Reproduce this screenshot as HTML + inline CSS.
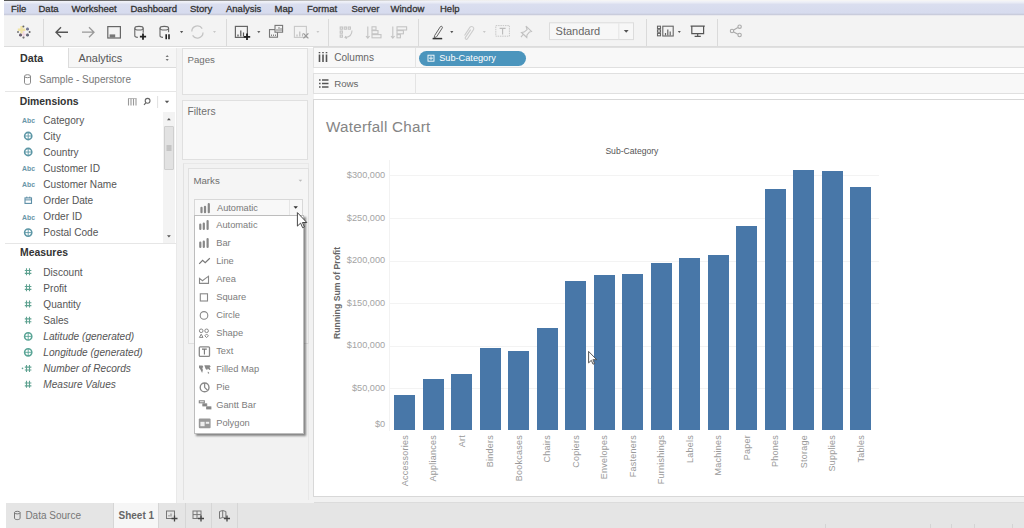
<!DOCTYPE html>
<html><head><meta charset="utf-8">
<style>
*{margin:0;padding:0;box-sizing:border-box}
html,body{width:1024px;height:528px;overflow:hidden;background:#fff;font-family:"Liberation Sans",sans-serif;color:#555}
.a{position:absolute;white-space:nowrap}
#menu{position:absolute;left:4px;top:0;width:1020px;height:16px;background:linear-gradient(#f4f5f9 0,#eef0f7 2px,#dadeef 4.5px,#d6dbee 13px,#c9ccdc 14.5px,#e9e9ee 15.5px)}
#topl{position:absolute;left:4px;top:0;width:1020px;height:1px;background:linear-gradient(90deg,#555 0,#777 150px,#bbb 300px,#eee 450px,#f5f5f5 600px)}
#menu span{position:absolute;top:4px;margin-left:-4px;font-size:9.5px;color:#333;line-height:10px;-webkit-text-stroke:0.3px #333}
#tb{position:absolute;left:4px;top:16px;width:1020px;height:31px;background:#f3f3f3;border-bottom:1px solid #dcdcdc}
.sep{position:absolute;top:3px;margin-left:-4px;width:1px;height:27px;background:#dadada}
.dd{position:absolute;font-size:6px;color:#666}
#left{position:absolute;left:5px;top:48px;width:171px;height:455px;background:#fff}
.fld{position:absolute;left:43.3px;font-size:10.1px;color:#555;line-height:12px}
.ico{position:absolute;left:21px;font-size:7.5px;font-weight:bold;color:#5f8fa6;line-height:10px}
.card{position:absolute;background:#f8f8f8;border:1px solid #e0e0e0}
.lbl{position:absolute;font-size:10px;color:#707070;line-height:12px}
.mi{position:absolute;left:22px;font-size:9.5px;color:#777;line-height:12px}
#chart{position:absolute;left:313px;top:98.6px;width:711px;height:398.6px;background:#fff;border:1px solid #d8d8d8;border-right:none}
.bar{position:absolute;width:21px;background:#4877a8}
.xl{position:absolute;font-size:9px;letter-spacing:0.25px;color:#999;transform-origin:0 0;transform:rotate(-90deg);line-height:10px}
.yl{position:absolute;font-size:8.5px;color:#a4a4a4;line-height:10px;text-align:right;width:60px}
.gl{position:absolute;left:77px;width:560px;height:1px;background:#f1f1f1}
#bot{position:absolute;left:6px;top:503px;width:1018px;height:25px;background:#e5e5e5}
</style></head><body>

<div id="menu">
<div id="topl" style="left:0"></div>
<span style="left:11px">File</span><span style="left:38.5px">Data</span><span style="left:71.5px">Worksheet</span><span style="left:130.5px">Dashboard</span><span style="left:190px">Story</span><span style="left:226px">Analysis</span><span style="left:274.5px">Map</span><span style="left:307px">Format</span><span style="left:351.5px">Server</span><span style="left:390.5px">Window</span><span style="left:440px">Help</span>
</div>

<div id="tb">
<svg style="position:absolute;left:-4px;top:0" width="1024" height="32" viewBox="0 16 1024 32">
<g fill="none" stroke-linecap="butt">
<!-- logo -->
<g style="filter:blur(0.7px)">
<path d="M21.6 26v7.5M17.8 29.7h7.6" stroke="#f1e4a6" stroke-width="2.4"/>
<path d="M23.6 31v7M20.5 34.5h6.5" stroke="#f0d8e0" stroke-width="1.6"/>
<path d="M27.5 27.6v3M26 29.1h3" stroke="#777a98" stroke-width="1.6"/>
<path d="M20.5 33.6v3M19 35.1h3" stroke="#6a6070" stroke-width="1.6"/>
<path d="M27.5 33.6v3M26 35.1h3" stroke="#666a7a" stroke-width="1.6"/>
<circle cx="23.4" cy="26.6" r="1" fill="#666" stroke="none"/>
<circle cx="18" cy="32" r="1" fill="#777" stroke="none"/>
<circle cx="29.6" cy="32" r="1" fill="#666" stroke="none"/>
<circle cx="23.5" cy="37.6" r="1.1" fill="#777" stroke="none"/>
</g>
<!-- back / fwd -->
<path d="M56 32.2h12M61 27.2l-5 5 5 5" stroke="#555" stroke-width="1.4"/>
<path d="M82 32.2h12M89 27.2l5 5-5 5" stroke="#999" stroke-width="1.3"/>
<!-- save -->
<rect x="107.8" y="26.6" width="12.6" height="11.4" stroke="#666" stroke-width="1.2"/>
<rect x="109.6" y="34.4" width="5.6" height="3.2" fill="#777" stroke="none"/>
<!-- db plus -->
<path d="M134.8 28.2v7.6c0 1 1.8 1.6 3 1.6M143.2 28.2v4.6" stroke="#666" stroke-width="1.1"/>
<ellipse cx="139" cy="28.2" rx="4.2" ry="1.8" stroke="#666" stroke-width="1.1"/>
<path d="M143 33.6v6.2M139.9 36.7h6.2" stroke="#222" stroke-width="1.8"/>
<!-- db pause -->
<path d="M160 28.2v7.6c0 1 1.8 1.6 3 1.6M168.6 28.2v4" stroke="#666" stroke-width="1.1"/>
<ellipse cx="164.3" cy="28.2" rx="4.3" ry="1.8" stroke="#666" stroke-width="1.1"/>
<path d="M166.2 34.2v5M169 34.2v5" stroke="#222" stroke-width="1.6"/>
<!-- refresh -->
<path d="M191.8 31.5a5.6 5.6 0 0 1 10.4-2.8M203 32.5a5.6 5.6 0 0 1-10.4 2.8" stroke="#c4c4c4" stroke-width="1.3"/>
<!-- new ws -->
<rect x="235.4" y="26.4" width="12" height="11" stroke="#666" stroke-width="1.2"/>
<path d="M238 36.5v-2M240.8 36.5v-6M243.5 36.5v-4" stroke="#555" stroke-width="1.2"/>
<path d="M247 33.6v6.4M243.8 36.8h6.4" stroke="#222" stroke-width="1.8"/>
<!-- duplicate -->
<rect x="269.5" y="29.6" width="8" height="7.6" stroke="#777" stroke-width="1.1"/>
<rect x="275" y="25.4" width="7.6" height="6.8" fill="#f3f3f3" stroke="#777" stroke-width="1.1"/>
<path d="M277 31v-2M279 31v-4M281 31v-3M271.5 36v-1.5M273.5 36v-1.5M275.5 36v-1.5" stroke="#777" stroke-width="0.9"/>
<!-- clear -->
<rect x="294.4" y="26.4" width="12" height="11" stroke="#c8c8c8" stroke-width="1.1"/>
<path d="M297 36.5v-2M299.8 36.5v-5M302.5 36.5v-3" stroke="#bbb" stroke-width="1.1"/>
<path d="M303.4 33.4l5 5M308.4 33.4l-5 5" stroke="#999" stroke-width="1.3"/>
<!-- swap -->
<g stroke="#c4c4c4" stroke-width="1.1">
<rect x="340.2" y="27" width="2.2" height="2.2"/><rect x="340.2" y="31" width="2.2" height="2.2"/><rect x="340.2" y="35" width="2.2" height="2.2"/>
<rect x="344.2" y="27" width="2.2" height="2.2"/><rect x="348.2" y="27" width="2.2" height="2.2"/>
<path d="M352 30.5c0 4-3 6.5-6.5 7M346 36l-1 1.6 2 1"/>
</g>
<!-- sort asc -->
<g stroke="#c4c4c4" stroke-width="1.1">
<path d="M367.8 26.5v11.5M366 36l1.8 2.2 1.8-2.2"/>
<rect x="372" y="26.8" width="4" height="3.2"/><rect x="372" y="30.6" width="6" height="3.2"/><rect x="372" y="34.6" width="9" height="3.2"/>
<path d="M392.8 26.5v11.5M391 36l1.8 2.2 1.8-2.2"/>
<rect x="397" y="26.8" width="9.6" height="3.2"/><rect x="397" y="30.6" width="6.4" height="3.2"/><rect x="397" y="34.6" width="3.4" height="3.2"/>
</g>
<!-- pen -->
<path d="M434.6 35.6l5.8-9a1.2 1.2 0 0 1 2 1.2l-5.8 9-2.4 0.9z" stroke="#666" stroke-width="1"/>
<path d="M432.6 38.6h9.6" stroke="#333" stroke-width="1.5"/>
<!-- clip -->
<path d="M464.5 35.5l5.5-8.3a2.2 2.2 0 0 1 3.6 2.4l-6.2 9.2a1.2 1.2 0 0 1-2-1.4l5.3-7.8" stroke="#ccc" stroke-width="1.1"/>
<!-- T box -->
<rect x="495.8" y="25.6" width="13.6" height="10.6" stroke="#c8c8c8" stroke-width="1" stroke-dasharray="1.5 0.8"/>
<path d="M499.6 28.4h6M502.6 28.4v6" stroke="#bbb" stroke-width="1.1"/>
<!-- pin -->
<path d="M526 26.2l5.5 5.2-2 0.6-2.5 3-0.2 2.5-5.3-5 2.6-0.4 3-2.5z M523 34.5l-2 2.6" stroke="#c0c0c0" stroke-width="1.1"/>
<!-- standard box -->
<rect x="549.5" y="22.8" width="84" height="16.8" fill="#f7f7f7" stroke="#dcdcdc" stroke-width="1"/>
<path d="M618.8 23.3v16" stroke="#e4e4e4" stroke-width="1"/>
<!-- show me -->
<g stroke="#666" stroke-width="1.1">
<rect x="657.5" y="26.2" width="3" height="2.4"/><rect x="657.5" y="29.8" width="3" height="2.4"/><rect x="657.5" y="33.4" width="3" height="2.4"/>
<rect x="662.8" y="26.2" width="10.4" height="9.8"/>
<path d="M665.5 35.5v-2.5M667.8 35.5v-6M670.2 35.5v-4" stroke-width="1.2"/>
</g>
<!-- presentation -->
<path d="M690.6 26.2h14.2M691.8 26.2v7.4h11.8v-7.4M697.7 33.6v2.6M694.6 36.3h6.2" stroke="#555" stroke-width="1.2"/>
<!-- share -->
<g stroke="#aaa" stroke-width="1.1">
<circle cx="732" cy="31" r="1.7"/><circle cx="739.6" cy="26.7" r="1.7"/><circle cx="739.6" cy="35" r="1.7"/>
<path d="M733.7 30l4.2-2.4M733.7 32l4.2 2.2"/>
</g>
</g>
<g fill="#555">
<path d="M180 31l3.2 0 -1.6 2.2z"/>
<path d="M213 31l3 0 -1.5 2z" fill="#c8c8c8"/>
<path d="M257.2 31l3.2 0 -1.6 2.2z" fill="#666"/>
<path d="M316.4 31l3 0 -1.5 2z" fill="#c8c8c8"/>
<path d="M450.2 31l3.2 0 -1.6 2.2z"/>
<path d="M482.8 31l3 0 -1.5 2z" fill="#c8c8c8"/>
<path d="M623.8 30l4.8 0 -2.4 2.8z"/>
<path d="M677.8 31l3 0 -1.5 2z"/>
</g>
<text x="555.6" y="34.6" font-family="Liberation Sans" font-size="11" fill="#666">Standard</text>
</svg>
<div class="sep" style="left:43px"></div>
<div class="sep" style="left:225.5px"></div>
<div class="sep" style="left:328px"></div>
<div class="sep" style="left:418px"></div>
<div class="sep" style="left:646px"></div>
<div class="sep" style="left:717px"></div>
</div>

<div id="left">
</div>
<div class="a" style="left:68px;top:48px;width:108px;height:20px;background:#f6f6f6;border-left:1px solid #dcdcdc;border-bottom:1px solid #dcdcdc"></div>
<div class="a" style="left:5px;top:67px;width:63px;height:1px;background:#fff"></div>
<div class="a" style="left:20px;top:52px;font-size:10.7px;font-weight:bold;color:#333;line-height:12px">Data</div>
<div class="a" style="left:78.5px;top:52px;font-size:10.9px;color:#555;line-height:12px">Analytics</div>
<div class="a" style="left:39.3px;top:73.5px;font-size:10px;color:#777;line-height:12px">Sample - Superstore</div>
<div class="a" style="left:5px;top:91px;width:171px;height:1px;background:#e6e6e6"></div>
<div class="a" style="left:19.7px;top:96px;font-size:10.4px;font-weight:bold;color:#333;line-height:12px">Dimensions</div>
<div class="a" style="left:20px;top:247.4px;font-size:10.4px;font-weight:bold;color:#333;line-height:12px">Measures</div>
<div class="a" style="left:5px;top:243px;width:171px;height:1px;background:#e6e6e6"></div>
<div class="fld" style="top:114.9px">Category</div>
<div class="fld" style="top:130.7px">City</div>
<div class="fld" style="top:146.7px">Country</div>
<div class="fld" style="top:162.7px">Customer ID</div>
<div class="fld" style="top:178.7px">Customer Name</div>
<div class="fld" style="top:195.1px">Order Date</div>
<div class="fld" style="top:211.2px">Order ID</div>
<div class="fld" style="top:227.3px">Postal Code</div>
<div class="fld" style="top:266.5px;">Discount</div>
<div class="fld" style="top:282.5px;">Profit</div>
<div class="fld" style="top:298.7px;">Quantity</div>
<div class="fld" style="top:314.9px;">Sales</div>
<div class="fld" style="top:331.1px;font-style:italic;">Latitude (generated)</div>
<div class="fld" style="top:347.0px;font-style:italic;">Longitude (generated)</div>
<div class="fld" style="top:363.1px;font-style:italic;">Number of Records</div>
<div class="fld" style="top:379.0px;font-style:italic;">Measure Values</div>
<div class="a" style="left:163px;top:112px;width:12px;height:131px;background:#f3f3f3"></div>
<div class="a" style="left:164px;top:126px;width:10px;height:44px;background:#e2e2e2;border:1px solid #cfcfcf;border-radius:1px"></div>
<svg style="position:absolute;left:0;top:0" width="1024" height="528"><g fill="none"><path d="M165.6 57l1.6-2 1.6 2zM165.6 59l1.6 2 1.6-2z" fill="#777"/><path d="M24.5 76.2v6.6c0 1 1.4 1.6 3 1.6s3-0.6 3-1.6v-6.6" stroke="#888" stroke-width="1"/><ellipse cx="27.5" cy="76.2" rx="3" ry="1.5" stroke="#888" stroke-width="1"/><path d="M128.5 98.5v7M131 98.5v7M133.5 98.5v7M136 98.5v7" stroke="#999" stroke-width="1.1"/><path d="M128 98.5h8.5" stroke="#aaa" stroke-width="0.8"/><circle cx="147.6" cy="100.8" r="2.4" stroke="#666" stroke-width="1.1"/><path d="M145.8 102.8l-1.8 2" stroke="#666" stroke-width="1.2"/><path d="M157.6 96v12" stroke="#e0e0e0"/><path d="M164.8 100.8h4.4l-2.2 2.4z" fill="#555"/><path d="M167 120.2h3.8l-1.9-2.2z" fill="#555"/><path d="M167 235.2h3.8l-1.9 2.2z" fill="#555"/><path d="M166.5 146h5M166.5 148h5M166.5 150h5" stroke="#999" stroke-width="0.8"/><text x="22" y="123.2" font-family="Liberation Sans" font-size="8" font-weight="bold" fill="#6a95a8" textLength="13" lengthAdjust="spacingAndGlyphs">Abc</text><circle cx="28.2" cy="136.0" r="3.6" stroke="#5d97a6" stroke-width="1.6"/><path d="M24.6 136.0h7.2M28.2 132.4v7.2" stroke="#5d97a6" stroke-width="0.9"/><circle cx="28.2" cy="152.0" r="3.6" stroke="#5d97a6" stroke-width="1.6"/><path d="M24.6 152.0h7.2M28.2 148.4v7.2" stroke="#5d97a6" stroke-width="0.9"/><text x="22" y="171.0" font-family="Liberation Sans" font-size="8" font-weight="bold" fill="#6a95a8" textLength="13" lengthAdjust="spacingAndGlyphs">Abc</text><text x="22" y="187.0" font-family="Liberation Sans" font-size="8" font-weight="bold" fill="#6a95a8" textLength="13" lengthAdjust="spacingAndGlyphs">Abc</text><rect x="25" y="197.9" width="6.5" height="5.5" stroke="#5d8ea6" stroke-width="1.1"/><path d="M25 199.9h6.5M26.8 196.6v1.6M29.8 196.6v1.6" stroke="#5d8ea6" stroke-width="1"/><text x="22" y="219.5" font-family="Liberation Sans" font-size="8" font-weight="bold" fill="#6a95a8" textLength="13" lengthAdjust="spacingAndGlyphs">Abc</text><circle cx="28.2" cy="232.6" r="3.6" stroke="#5d97a6" stroke-width="1.6"/><path d="M24.6 232.6h7.2M28.2 229.0v7.2" stroke="#5d97a6" stroke-width="0.9"/><path d="M26.5 268.3v7M29.5 268.3v7M24.8 270.5h6.6M24.8 273.4h6.6" stroke="#5fa291" stroke-width="1.1"/><path d="M26.5 284.3v7M29.5 284.3v7M24.8 286.5h6.6M24.8 289.4h6.6" stroke="#5fa291" stroke-width="1.1"/><path d="M26.5 300.5v7M29.5 300.5v7M24.8 302.7h6.6M24.8 305.6h6.6" stroke="#5fa291" stroke-width="1.1"/><path d="M26.5 316.7v7M29.5 316.7v7M24.8 318.9h6.6M24.8 321.8h6.6" stroke="#5fa291" stroke-width="1.1"/><circle cx="28.2" cy="336.4" r="3.6" stroke="#5aa596" stroke-width="1.6"/><path d="M24.6 336.4h7.2M28.2 332.8v7.2" stroke="#5aa596" stroke-width="0.9"/><circle cx="28.2" cy="352.3" r="3.6" stroke="#5aa596" stroke-width="1.6"/><path d="M24.6 352.3h7.2M28.2 348.7v7.2" stroke="#5aa596" stroke-width="0.9"/><path d="M26.5 364.9v7M29.5 364.9v7M24.8 367.1h6.6M24.8 370.0h6.6" stroke="#5fa291" stroke-width="1.1"/><circle cx="22.5" cy="368.4" r="0.8" fill="#5fa291"/><path d="M26.5 380.8v7M29.5 380.8v7M24.8 383.0h6.6M24.8 385.9h6.6" stroke="#5fa291" stroke-width="1.1"/></g></svg>

<div class="a" style="left:177px;top:48px;width:137px;height:455px;background:#f2f2f2"></div>
<div class="a" style="left:176px;top:48px;width:1px;height:455px;background:#e9e9e9"></div>
<div class="card" style="left:182px;top:48px;width:126px;height:47px"></div>
<div class="card" style="left:182px;top:99.5px;width:126px;height:60px"></div>
<div class="a" style="left:183px;top:163px;width:126px;height:337px;border-left:1px solid #e2e2e2;border-top:1px solid #e8e8e8;border-right:1px solid #e8e8e8"></div>
<div class="card" style="left:188px;top:168px;width:120.5px;height:176px;background:#f5f5f5"></div>
<div class="lbl" style="left:187.5px;top:54px;font-size:9.7px">Pages</div>
<div class="lbl" style="left:187.5px;top:106px;font-size:10.3px">Filters</div>
<div class="lbl" style="left:193.4px;top:175px;font-size:9.7px">Marks</div>
<div class="a" style="left:194px;top:199px;width:109px;height:17px;background:#f8f8f8;border:1px solid #d8d8d8"></div>
<div class="a" style="left:289px;top:200px;width:1px;height:15px;background:#e6e6e6"></div>
<div class="lbl" style="left:217px;top:202px;font-size:9.2px;color:#777">Automatic</div>
<div class="a" style="left:193.5px;top:215px;width:110.5px;height:218.5px;background:#fff;border:1px solid #bdbdbd;box-shadow:2px 2px 2px rgba(0,0,0,0.45)"></div>
<div class="lbl" style="left:216.2px;top:219.4px;font-size:9.3px;color:#7c7c7c">Automatic</div>
<div class="lbl" style="left:216.2px;top:237.4px;font-size:9.3px;color:#7c7c7c">Bar</div>
<div class="lbl" style="left:216.2px;top:255.4px;font-size:9.3px;color:#7c7c7c">Line</div>
<div class="lbl" style="left:216.2px;top:273.4px;font-size:9.3px;color:#7c7c7c">Area</div>
<div class="lbl" style="left:216.2px;top:291.4px;font-size:9.3px;color:#7c7c7c">Square</div>
<div class="lbl" style="left:216.2px;top:309.4px;font-size:9.3px;color:#7c7c7c">Circle</div>
<div class="lbl" style="left:216.2px;top:327.4px;font-size:9.3px;color:#7c7c7c">Shape</div>
<div class="lbl" style="left:216.2px;top:345.4px;font-size:9.3px;color:#7c7c7c">Text</div>
<div class="lbl" style="left:216.2px;top:363.4px;font-size:9.3px;color:#7c7c7c">Filled Map</div>
<div class="lbl" style="left:216.2px;top:381.4px;font-size:9.3px;color:#7c7c7c">Pie</div>
<div class="lbl" style="left:216.2px;top:399.4px;font-size:9.3px;color:#7c7c7c">Gantt Bar</div>
<div class="lbl" style="left:216.2px;top:417.4px;font-size:9.3px;color:#7c7c7c">Polygon</div>
<div class="a" style="left:313px;top:46.8px;width:711px;height:21px;background:#f8f8f8;border:1px solid #e0e0e0;border-right:none"></div>
<div class="a" style="left:313px;top:72.6px;width:711px;height:21px;background:#f8f8f8;border:1px solid #e0e0e0;border-right:none"></div>
<div class="a" style="left:415px;top:48px;width:1px;height:20px;background:#e4e4e4"></div>
<div class="a" style="left:415px;top:74px;width:1px;height:20px;background:#e4e4e4"></div>
<div class="lbl" style="left:334.2px;top:52px;font-size:10.1px;color:#666">Columns</div>
<div class="lbl" style="left:334.2px;top:78px;font-size:9.7px;color:#666">Rows</div>
<div class="a" style="left:419.3px;top:51px;width:107px;height:15px;border-radius:8px;background:#4b95bd"></div>
<div class="a" style="left:439.2px;top:52.5px;font-size:9.2px;color:#fff;line-height:11px">Sub-Category</div>
<svg style="position:absolute;left:0;top:0" width="1024" height="528"><g fill="none"><path d="M298.6 179.8h3.6l-1.8 2z" fill="#bbb"/><path d="M293.5 206.2h4.4l-2.2 2.6z" fill="#333"/><path d="M201.5 212.2v-4.4M205 212.2v-5.4M208.8 212.2v-8" stroke="#888" stroke-width="2.2" stroke-linecap="round"/><path d="M200.3 229.0v-4.4M203.8 229.0v-5.4M207.6 229.0v-8" stroke="#888" stroke-width="2.2" stroke-linecap="round"/><path d="M200.3 247.0v-4.4M203.8 247.0v-5.4M207.6 247.0v-8" stroke="#888" stroke-width="2.2" stroke-linecap="round"/><path d="M199.2 263.9l3.4-3.6 2.6 2.4 4.6-4.4" stroke="#777" stroke-width="1.2"/><path d="M199.5 283.4v-5l3 2.4 3-2.4 3 -2v7z" stroke="#888" stroke-width="1.1"/><rect x="200.3" y="293.8" width="7.2" height="7.2" stroke="#888" stroke-width="1.1"/><circle cx="204" cy="315.4" r="3.8" stroke="#888" stroke-width="1.1"/><circle cx="201.2" cy="330.8" r="1.8" stroke="#888" stroke-width="1"/><circle cx="206.6" cy="330.8" r="1.8" stroke="#888" stroke-width="1"/><path d="M199.4 337.4l1.8-3.2 1.8 3.2z" stroke="#888" stroke-width="1"/><path d="M206.6 334.0l1.8 1.8-1.8 1.8-1.8-1.8z" stroke="#888" stroke-width="1"/><rect x="199.3" y="346.8" width="10.2" height="9.6" rx="1" stroke="#888" stroke-width="1.3"/><path d="M202 349.1h4.8M204.4 349.1v5.4" stroke="#777" stroke-width="1.1"/><path d="M199 365.4h3.5l0.8 1.5-1 1.2 0.6 1.8-0.8 3.2-1.2-2.6-0.8-1.6-1.1-1.2z" fill="#888" stroke="none"/><path d="M204.3 365.2h5.4l1 1.3-1.2 1.2 1.2 1.8-1.4 0.4-1.4-1.4-0.8 1.6-1.4-1z" fill="#888" stroke="none"/><path d="M207.6 371.8l1.4 0.2 0.2 1.4-1.2 0.4z" fill="#999" stroke="none"/><circle cx="204.6" cy="387.4" r="4.4" stroke="#888" stroke-width="1.4"/><path d="M204.6 387.4v-4.4M204.6 387.4l3 3" stroke="#888" stroke-width="1.3"/><rect x="199.3" y="400.8" width="5" height="2" stroke="#888" stroke-width="1.1"/><rect x="202.8" y="403.8" width="4" height="2.2" fill="#888" stroke="#888" stroke-width="0.8"/><rect x="206.6" y="406.8" width="4.4" height="2.2" fill="#888" stroke="#888" stroke-width="0.8"/><rect x="198.8" y="418.4" width="11.8" height="9.8" rx="1" fill="#999" stroke="none"/><path d="M200.4 421.8h4.2v4.4h-4.2z" fill="#eee" stroke="none"/><path d="M205.8 421.8h3.4v2h-3.4z" fill="#eee" stroke="none"/><path d="M319.5 54.5v7.5M323 54.5v7.5M326.5 54.5v7.5" stroke="#555" stroke-width="1.6"/><path d="M319.5 52v1.2M323 52v1.2M326.5 52v1.2" stroke="#555" stroke-width="1.6"/><path d="M319 80h1.6M319 83.5h1.6M319 87h1.6M322 80h6.5M322 83.5h6.5M322 87h6.5" stroke="#555" stroke-width="1.4"/><rect x="428" y="55.2" width="6" height="6" stroke="#fff" stroke-width="0.9"/><path d="M431 56.2v4M429 58.2h4" stroke="#fff" stroke-width="0.8"/></g></svg>
<div id="chart">
</div>
<div class="a" style="left:326px;top:118.3px;font-size:15.2px;letter-spacing:0.25px;color:#858585;line-height:18px">Waterfall Chart</div>
<div class="a" style="left:605.4px;top:145.5px;font-size:8.6px;color:#555;line-height:10px">Sub-Category</div>
<div class="yl" style="left:325.2px;top:418.5px;font-size:9.2px">$0</div>
<div class="yl" style="left:325.2px;top:382.9px;font-size:9.2px">$50,000</div>
<div class="a" style="left:389px;top:388.4px;width:490px;height:1px;background:#f3f3f3"></div>
<div class="yl" style="left:325.2px;top:340.3px;font-size:9.2px">$100,000</div>
<div class="a" style="left:389px;top:345.8px;width:490px;height:1px;background:#f3f3f3"></div>
<div class="yl" style="left:325.2px;top:297.7px;font-size:9.2px">$150,000</div>
<div class="a" style="left:389px;top:303.2px;width:490px;height:1px;background:#f3f3f3"></div>
<div class="yl" style="left:325.2px;top:255.1px;font-size:9.2px">$200,000</div>
<div class="a" style="left:389px;top:260.6px;width:490px;height:1px;background:#f3f3f3"></div>
<div class="yl" style="left:325.2px;top:212.5px;font-size:9.2px">$250,000</div>
<div class="a" style="left:389px;top:218.0px;width:490px;height:1px;background:#f3f3f3"></div>
<div class="yl" style="left:325.2px;top:169.9px;font-size:9.2px">$300,000</div>
<div class="a" style="left:389px;top:175.4px;width:490px;height:1px;background:#f3f3f3"></div>
<div class="a" style="left:389px;top:160px;width:1px;height:271px;background:#f2f2f2"></div>
<div class="bar" style="left:394.0px;top:394.8px;height:35.2px"></div>
<div class="xl" style="left:399.5px;top:435.2px;transform:translateY(0) rotate(-90deg) translateX(-100%);">Accessories</div>
<div class="bar" style="left:422.5px;top:379.3px;height:50.7px"></div>
<div class="xl" style="left:428.0px;top:435.2px;transform:translateY(0) rotate(-90deg) translateX(-100%);">Appliances</div>
<div class="bar" style="left:451.0px;top:373.8px;height:56.2px"></div>
<div class="xl" style="left:456.5px;top:435.2px;transform:translateY(0) rotate(-90deg) translateX(-100%);">Art</div>
<div class="bar" style="left:479.5px;top:348.0px;height:82.0px"></div>
<div class="xl" style="left:485.0px;top:435.2px;transform:translateY(0) rotate(-90deg) translateX(-100%);">Binders</div>
<div class="bar" style="left:508.0px;top:351.0px;height:79.0px"></div>
<div class="xl" style="left:513.5px;top:435.2px;transform:translateY(0) rotate(-90deg) translateX(-100%);">Bookcases</div>
<div class="bar" style="left:536.5px;top:328.3px;height:101.7px"></div>
<div class="xl" style="left:542.0px;top:435.2px;transform:translateY(0) rotate(-90deg) translateX(-100%);">Chairs</div>
<div class="bar" style="left:565.0px;top:280.9px;height:149.1px"></div>
<div class="xl" style="left:570.5px;top:435.2px;transform:translateY(0) rotate(-90deg) translateX(-100%);">Copiers</div>
<div class="bar" style="left:593.5px;top:275.0px;height:155.0px"></div>
<div class="xl" style="left:599.0px;top:435.2px;transform:translateY(0) rotate(-90deg) translateX(-100%);">Envelopes</div>
<div class="bar" style="left:622.0px;top:274.2px;height:155.8px"></div>
<div class="xl" style="left:627.5px;top:435.2px;transform:translateY(0) rotate(-90deg) translateX(-100%);">Fasteners</div>
<div class="bar" style="left:650.5px;top:263.1px;height:166.9px"></div>
<div class="xl" style="left:656.0px;top:435.2px;transform:translateY(0) rotate(-90deg) translateX(-100%);">Furnishings</div>
<div class="bar" style="left:679.0px;top:258.3px;height:171.7px"></div>
<div class="xl" style="left:684.5px;top:435.2px;transform:translateY(0) rotate(-90deg) translateX(-100%);">Labels</div>
<div class="bar" style="left:707.5px;top:255.4px;height:174.6px"></div>
<div class="xl" style="left:713.0px;top:435.2px;transform:translateY(0) rotate(-90deg) translateX(-100%);">Machines</div>
<div class="bar" style="left:736.0px;top:226.4px;height:203.6px"></div>
<div class="xl" style="left:741.5px;top:435.2px;transform:translateY(0) rotate(-90deg) translateX(-100%);">Paper</div>
<div class="bar" style="left:764.5px;top:188.5px;height:241.5px"></div>
<div class="xl" style="left:770.0px;top:435.2px;transform:translateY(0) rotate(-90deg) translateX(-100%);">Phones</div>
<div class="bar" style="left:793.0px;top:170.4px;height:259.6px"></div>
<div class="xl" style="left:798.5px;top:435.2px;transform:translateY(0) rotate(-90deg) translateX(-100%);">Storage</div>
<div class="bar" style="left:821.5px;top:171.4px;height:258.6px"></div>
<div class="xl" style="left:827.0px;top:435.2px;transform:translateY(0) rotate(-90deg) translateX(-100%);">Supplies</div>
<div class="bar" style="left:850.0px;top:186.5px;height:243.5px"></div>
<div class="xl" style="left:855.5px;top:435.2px;transform:translateY(0) rotate(-90deg) translateX(-100%);">Tables</div>
<div class="a" style="left:331.5px;top:339px;font-size:8.7px;font-weight:bold;color:#666;line-height:10px;transform-origin:0 0;transform:rotate(-90deg)">Running Sum of Profit</div>

<div class="a" style="left:314px;top:497px;width:710px;height:6px;background:#f1f1f1;border-bottom:1px solid #dcdcdc"></div>
<div id="bot">
</div>
<div class="a" style="left:825px;top:524px;width:1px;height:4px;background:#d4d4d4"></div><div class="a" style="left:930px;top:524px;width:1px;height:4px;background:#d4d4d4"></div><div class="a" style="left:951px;top:524px;width:1px;height:4px;background:#d4d4d4"></div><div class="a" style="left:974px;top:524px;width:1px;height:4px;background:#d4d4d4"></div><div class="a" style="left:1012px;top:524px;width:1px;height:4px;background:#d4d4d4"></div>
<div class="a" style="left:113px;top:503px;width:45px;height:25px;background:#f6f6f6"></div>
<div class="a" style="left:25.4px;top:510px;font-size:10px;color:#777;line-height:12px">Data Source</div>
<div class="a" style="left:118.5px;top:509.5px;font-size:10px;font-weight:bold;color:#666;line-height:12px">Sheet 1</div>
<div class="a" style="left:158px;top:503px;width:1px;height:25px;background:#d6d6d6"></div>
<div class="a" style="left:184.8px;top:503px;width:1px;height:25px;background:#d6d6d6"></div>
<div class="a" style="left:211.2px;top:503px;width:1px;height:25px;background:#d6d6d6"></div>
<div class="a" style="left:237.3px;top:503px;width:1px;height:25px;background:#d6d6d6"></div>
<div class="a" style="left:112.5px;top:503px;width:1px;height:25px;background:#d6d6d6"></div>
<svg style="position:absolute;left:0;top:0" width="1024" height="528"><g fill="none"><path d="M14.5 512.6v5.6c0 0.9 1.3 1.4 2.8 1.4s2.8-0.5 2.8-1.4v-5.6" stroke="#777" stroke-width="1"/><ellipse cx="17.3" cy="512.6" rx="2.8" ry="1.3" stroke="#777" stroke-width="1"/><rect x="166.5" y="511" width="8" height="7.5" stroke="#777" stroke-width="1"/><path d="M169 516.5v-1.5M171 516.5v-3" stroke="#777" stroke-width="0.9"/><path d="M174.5 515.5v6M171.5 518.5h6" stroke="#444" stroke-width="1.3"/><rect x="193" y="511" width="8" height="7.5" stroke="#777" stroke-width="1"/><path d="M193 514.6h8M197 511v7.5" stroke="#777" stroke-width="1"/><path d="M201 515.5v6M198 518.5h6" stroke="#444" stroke-width="1.3"/><path d="M219.5 511.5v7l3.2-1 3.2 1v-7l-3.2-1z M222.7 510.5v7" stroke="#777" stroke-width="1"/><path d="M227 515.5v6M224 518.5h6" stroke="#444" stroke-width="1.3"/><path d="M297.4 212.6v13.5l3.2-3 2 4.6 1.8-0.8-2-4.4h4.4z" fill="#fff" stroke="#333" stroke-width="0.9"/><path d="M588.6 351.4v11.5l2.7-2.6 1.7 3.9 1.6-0.7-1.7-3.8h3.8z" fill="#fff" stroke="#444" stroke-width="0.9"/></g></svg>

</body></html>
